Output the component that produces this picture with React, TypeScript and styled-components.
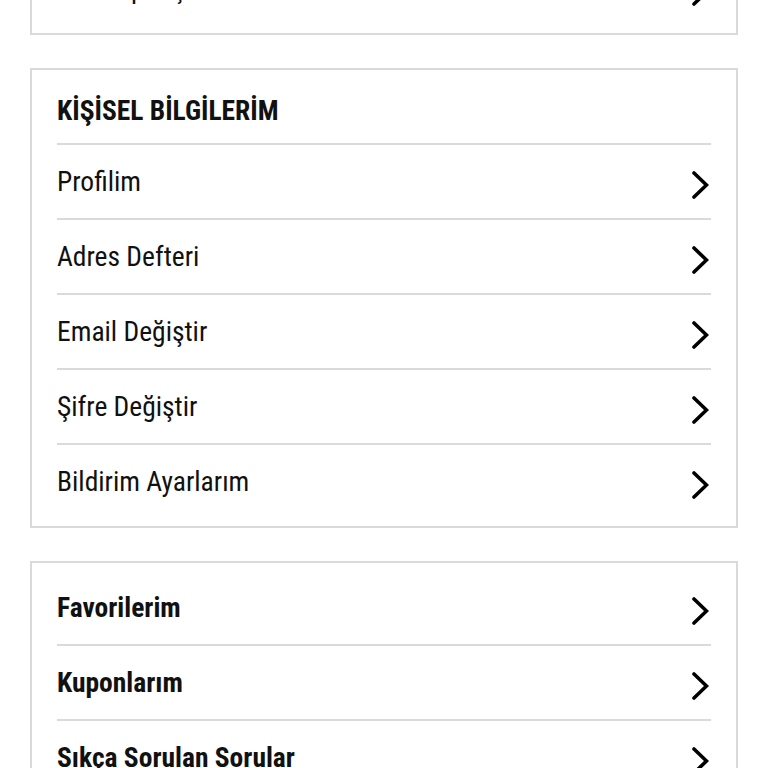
import styled, { createGlobalStyle } from 'styled-components'

const GlobalStyle = createGlobalStyle`
	html, body {
		margin: 0;
		padding: 0;
		background: #fff;
	}
	body {
		font-family: 'Roboto Condensed', 'Liberation Sans Narrow', Roboto, sans-serif;
		color: #111;
		overflow: hidden;
	}
`

const Page = styled.div`
	display: flex;
	flex-direction: column;
	gap: 33px;
	padding: 0 30px;
	margin-top: -58px;
`

const Card = styled.section`
	border: 2px solid #dadada;
	background: #fff;
	padding: 8px 25px;
	display: flex;
	flex-direction: column;
`

const Title = styled.h2`
	margin: 0;
	height: 65px;
	display: flex;
	align-items: center;
	font-size: 27.5px;
	font-weight: 700;
	border-bottom: 2px solid #dadada;
`

const Row = styled.a`
	height: 73px;
	display: flex;
	align-items: center;
	justify-content: space-between;
	border-bottom: 2px solid #dadada;
	color: inherit;
	text-decoration: none;
	cursor: pointer;
	&:last-child {
		border-bottom: none;
	}
`

const Label = styled.span<{ $bold?: boolean }>`
	font-size: 27.5px;
	font-weight: ${(p) => (p.$bold ? 700 : 400)};
`

const Chevron = styled.svg`
	width: 18px;
	height: 28px;
	margin-top: 6px;
	margin-right: 2px;
	flex-shrink: 0;
`

const Arrow = () => (
	<Chevron viewBox='0 0 18 28'>
		<path d='M3 2 L15.5 14 L3 26' fill='none' stroke='#000' strokeWidth='3.6' strokeLinecap='round' strokeLinejoin='miter' />
	</Chevron>
)

type Item = { label: string; bold?: boolean }

const personal: Item[] = [
	{ label: 'Profilim' },
	{ label: 'Adres Defteri' },
	{ label: 'Email Değiştir' },
	{ label: 'Şifre Değiştir' },
	{ label: 'Bildirim Ayarlarım' },
]

const other: Item[] = [
	{ label: 'Favorilerim', bold: true },
	{ label: 'Kuponlarım', bold: true },
	{ label: 'Sıkça Sorulan Sorular', bold: true },
]

const MenuRow = ({ label, bold }: Item) => (
	<Row>
		<Label $bold={bold}>{label}</Label>
		<Arrow />
	</Row>
)

export default function App() {
	return (
		<>
			<GlobalStyle />
			<Page>
				<Card>
					<MenuRow label='Tüm Siparişlerim' />
				</Card>
				<Card>
					<Title>KİŞİSEL BİLGİLERİM</Title>
					{personal.map((item) => (
						<MenuRow key={item.label} {...item} />
					))}
				</Card>
				<Card>
					{other.map((item) => (
						<MenuRow key={item.label} {...item} />
					))}
				</Card>
			</Page>
		</>
	)
}
